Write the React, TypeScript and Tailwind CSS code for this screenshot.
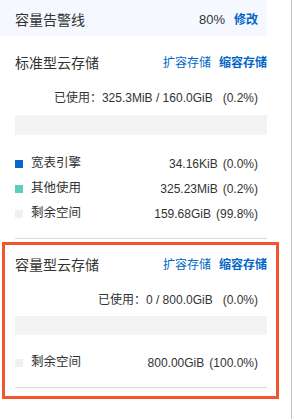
import React from "react";

const font = "font-['Liberation_Sans','Noto_Sans_CJK_SC',sans-serif]";

function Links() {
  return (
    <div className="flex items-center gap-[8px] text-[12px] leading-5 text-[#0064c8]">
      <span>扩容存储</span>
      <span className="font-semibold">缩容存储</span>
    </div>
  );
}

function LegendRow({ color, label, value, pct }: { color: string; label: string; value: string; pct: string }) {
  return (
    <div className="flex h-[25px] items-center justify-between pr-[9px] text-[12px] text-[#333]">
      <div className="flex items-center gap-[8px]">
        <span className={`h-2 w-2 ${color}`} />
        <span className="text-[12.5px]">{label}</span>
      </div>
      <div className="flex items-center gap-[5px]">
        <span>{value}</span>
        <span>{pct}</span>
      </div>
    </div>
  );
}

export default function App() {
  return (
    <div className={`flex h-[419px] w-[295px] bg-white ${font}`}>
      <div className="w-[291px]">
        <div className="flex h-[36px] w-[267px] items-center justify-between bg-[#f5f9ff] pl-[15px] pr-[9px] pt-[4px]">
          <span className="text-[14px] text-[#333]">容量告警线</span>
          <div className="flex items-center gap-[9px]">
            <span className="text-[13px] text-[#333]">80%</span>
            <span className="text-[12px] font-semibold text-[#0064c8]">修改</span>
          </div>
        </div>

        <div className="ml-[15px] w-[252px]">
          <div className="mt-[17px] flex h-[20px] items-center justify-between">
            <span className="text-[14px] text-[#333]">标准型云存储</span>
            <Links />
          </div>
          <div className="mt-[17px] h-4 pr-[9px] text-right text-[12px] leading-4 text-[#333] whitespace-pre">
            已使用：325.3MiB / 160.0GiB   (0.2%)
          </div>
          <div className="mt-[9px] h-5 bg-[#f3f3f3]" />
          <div className="mt-[16px]">
            <LegendRow color="bg-[#0a66cc]" label="宽表引擎" value="34.16KiB" pct="(0.0%)" />
            <LegendRow color="bg-[#5ccdb8]" label="其他使用" value="325.23MiB" pct="(0.2%)" />
            <LegendRow color="bg-[#f0f0f0]" label="剩余空间" value="159.68GiB" pct="(99.8%)" />
          </div>
          <div className="mt-[12px] h-px bg-[#dcdcdc]" />
        </div>

        <div className="ml-[2px] mt-[3px] w-[277px] border-[3px] border-[#f25430] pl-[10px] pr-[9px] pb-[8px]">
          <div className="mt-[10px] flex h-[20px] items-center justify-between">
            <span className="text-[14px] text-[#333]">容量型云存储</span>
            <Links />
          </div>
          <div className="mt-[17px] h-4 pr-[9px] text-right text-[12px] leading-4 text-[#333] whitespace-pre">
            已使用：0 / 800.0GiB   (0.0%)
          </div>
          <div className="mt-[8px] h-[19px] bg-[#f3f3f3]" />
          <div className="mt-[15px]">
            <LegendRow color="bg-[#f0f0f0]" label="剩余空间" value="800.00GiB" pct="(100.0%)" />
          </div>
          <div className="mt-[12px] h-px bg-[#dcdcdc]" />
        </div>
      </div>
      <div className="h-full w-px bg-[#c4c4c4]" />
    </div>
  );
}
